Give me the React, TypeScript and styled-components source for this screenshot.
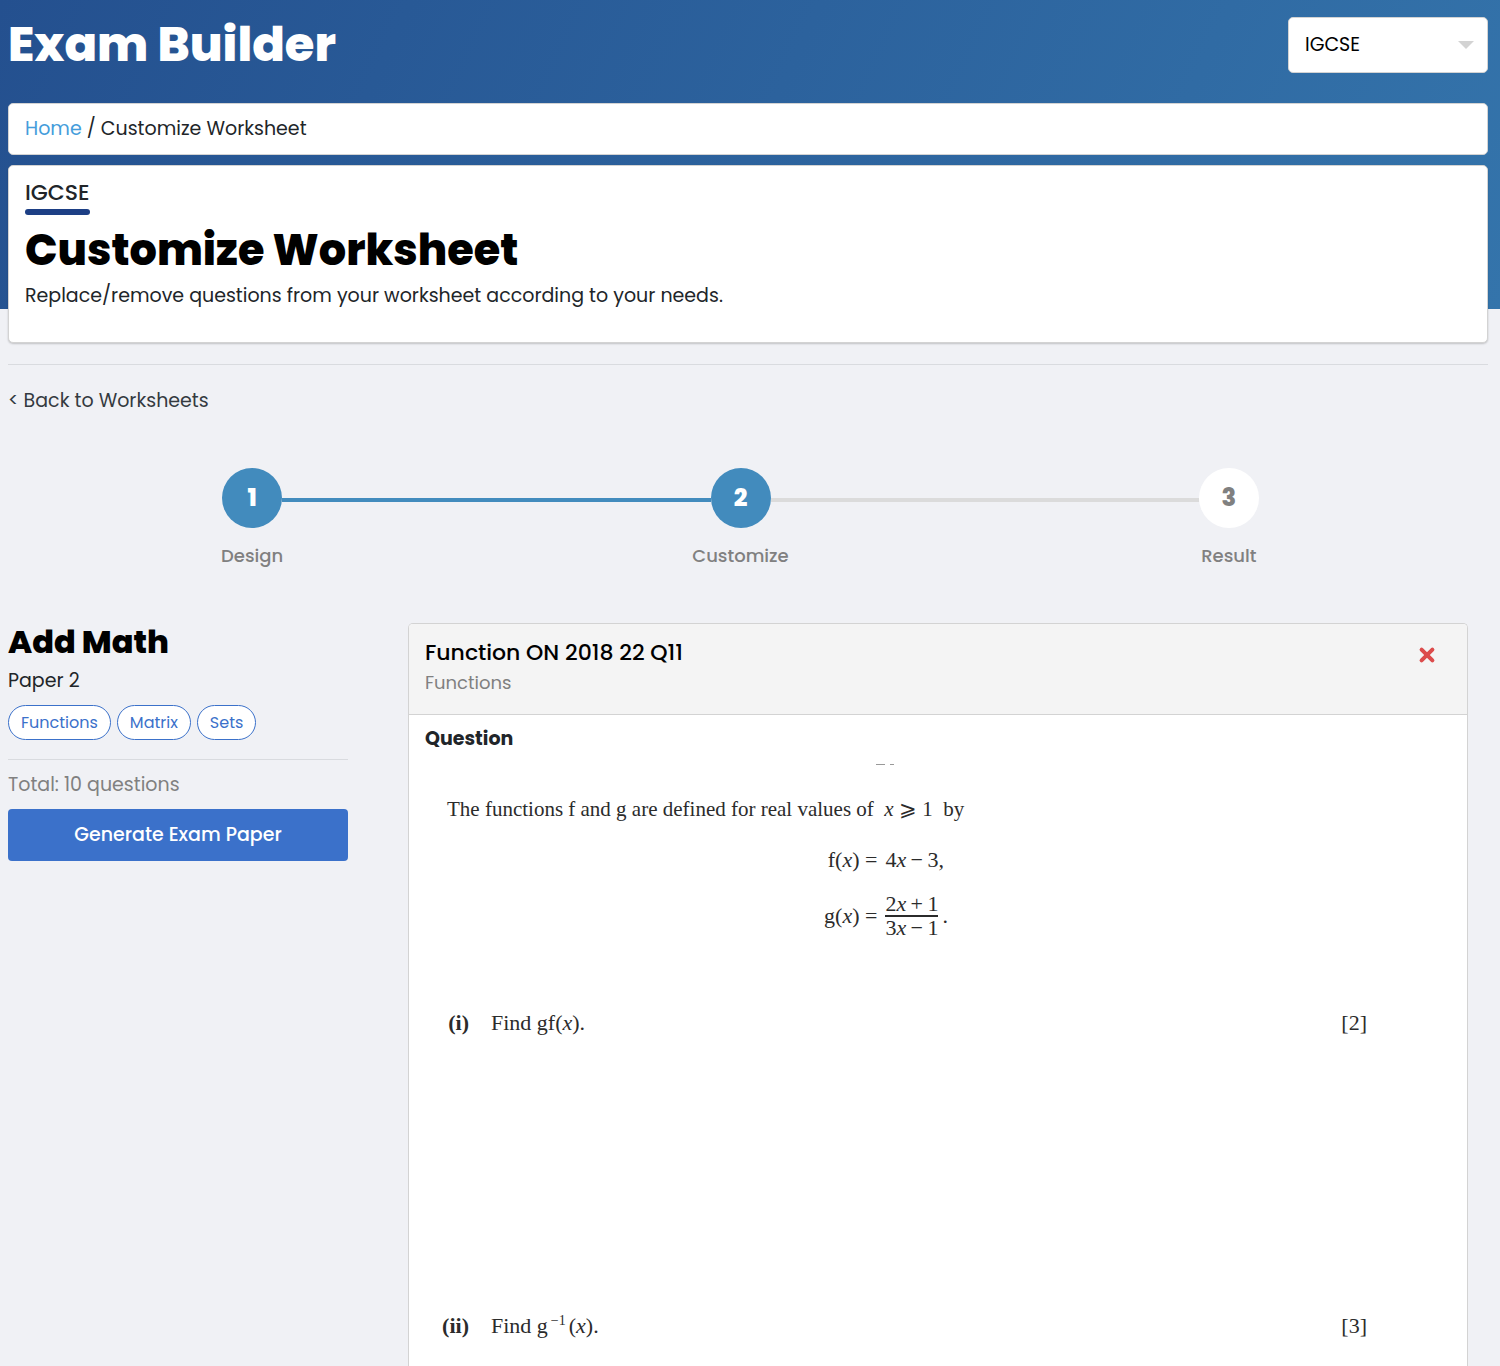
import React from "react";
import styled, { createGlobalStyle } from "styled-components";

const GlobalStyle = createGlobalStyle`
  *, *::before, *::after { box-sizing: border-box; }
  body {
    margin: 0;
    background: #f0f1f5;
    color: #212529;
    font-family: Poppins, Inter, "Open Sans", sans-serif;
    font-size: 19px;
    line-height: 28px;
  }
  h1, h2, h3, p { margin: 0; }
  button, select { font-family: inherit; }
`;

const Page = styled.div`
  display: flex;
  flex-direction: column;
  min-height: 100vh;
  padding: 17px 12px 0 8px;
  background: linear-gradient(115deg, #24508f 0%, #3474ab 100%) no-repeat top / 100% 309px;
`;

const Header = styled.header`
  display: flex;
  justify-content: space-between;
  align-items: center;
  margin-bottom: 30px;
`;

const Brand = styled.h1`
  color: #fff;
  font-size: 48px;
  font-weight: 800;
  line-height: 56px;
`;

const SelectBox = styled.label`
  display: grid;
  align-items: center;
  width: 200px;

  > * { grid-area: 1 / 1; }
  svg {
    justify-self: end;
    margin-right: 14px;
    pointer-events: none;
  }
`;

const CurriculumSelect = styled.select`
  appearance: none;
  height: 56px;
  padding: 0 40px 2px 16px;
  border: 1px solid #d3d3d3;
  border-radius: 5px;
  background: #fff;
  color: #000;
  font-size: 19px;
`;

const Panel = styled.div`
  padding: 0 16px;
  border: 1px solid #d3d3d3;
  border-radius: 5px;
  background: #fff;
`;

const Breadcrumb = styled(Panel).attrs({ as: "nav" })`
  padding-top: 11px;
  padding-bottom: 11px;
  margin-bottom: 10px;
`;

const HomeLink = styled.a`
  color: #459ddb;
  text-decoration: none;
`;

const Hero = styled(Panel).attrs({ as: "section" })`
  display: flex;
  flex-direction: column;
  align-items: flex-start;
  padding-top: 13px;
  padding-bottom: 32px;
  box-shadow: 0 1px 2px rgba(0, 0, 0, 0.2);
`;

const Eyebrow = styled.p`
  padding-bottom: 3px;
  font-size: 22px;
  font-weight: 500;

  &::after {
    content: "";
    display: block;
    height: 6px;
    margin-top: 2px;
    border-radius: 3px;
    background: #1d3f85;
  }
`;

const HeroTitle = styled.h2`
  color: #000;
  font-size: 43px;
  font-weight: 800;
  line-height: 64px;
`;

const Divider = styled.hr<{ $space: number }>`
  width: 100%;
  margin: ${(p) => p.$space}px 0 0;
  border: 0;
  border-top: 1px solid #d9dbdf;
`;

const BackLink = styled.a`
  align-self: flex-start;
  margin-top: 22px;
  color: #343a40;
  text-decoration: none;
`;

const Steps = styled.ol`
  display: grid;
  grid-template-columns: repeat(3, 1fr);
  margin: 53px 15px 0 0;
  padding: 0;
  list-style: none;
`;

const Step = styled.li`
  text-align: center;
  color: #808080;
  font-size: 18px;
  font-weight: 500;
`;

const StepTrack = styled.div`
  display: flex;
  align-items: center;
  margin-bottom: 14px;
`;

const StepLine = styled.span<{ $tone: string }>`
  flex: 1;
  height: 4px;
  margin-top: 4px;
  background: ${(p) => p.$tone};
`;

const StepCircle = styled.span<{ $done: boolean }>`
  width: 60px;
  height: 60px;
  border-radius: 50%;
  background: ${(p) => (p.$done ? "#428bbd" : "#fff")};
  color: ${(p) => (p.$done ? "#fff" : "#808080")};
  font-size: 24px;
  font-weight: 800;
  line-height: 60px;
`;

const Main = styled.main`
  display: grid;
  grid-template-columns: 340px 1fr;
  gap: 60px;
  flex: 1;
  padding: 53px 20px 0 0;
`;

const Sidebar = styled.aside`
  display: flex;
  flex-direction: column;
`;

const Subject = styled.h2`
  color: #000;
  font-size: 32px;
  font-weight: 800;
  line-height: 37px;
`;

const Paper = styled.p`
  margin: 7px 0 10px;
`;

const Tags = styled.ul`
  display: flex;
  flex-wrap: wrap;
  gap: 6px;
  margin: 0;
  padding: 0;
  list-style: none;
`;

const Tag = styled.li`
  padding: 3px 12px;
  border: 1px solid #3b71ca;
  border-radius: 18px;
  background: #fff;
  color: #3b71ca;
  font-size: 16px;
  line-height: 27px;
`;

const Total = styled.p`
  margin: 11px 0 10px;
  color: #808080;
`;

const GenerateButton = styled.button`
  height: 52px;
  padding: 0 0 2px;
  border: 0;
  border-radius: 4px;
  background: #3b71ca;
  color: #fff;
  font-size: 19px;
  font-weight: 500;
`;

const QuestionCard = styled.article`
  border: 1px solid #d3d3d3;
  border-bottom: 0;
  border-radius: 5px 5px 0 0;
  background: #fff;
  overflow: hidden;
`;

const CardHeader = styled.header`
  display: flex;
  justify-content: space-between;
  align-items: flex-start;
  padding: 15px 30px 17px 16px;
  border-bottom: 1px solid #d3d3d3;
  background: #f4f4f4;
`;

const CardTitle = styled.h3`
  margin-bottom: 2px;
  color: #000;
  font-size: 22px;
  font-weight: 500;
`;

const Topic = styled.p`
  color: #808080;
  font-size: 18px;
`;

const RemoveButton = styled.button`
  display: flex;
  margin-top: 6px;
  padding: 0;
  border: 0;
  background: none;
`;

const CardBody = styled.div`
  padding: 10px 16px 0;
`;

const SectionTitle = styled.h3`
  font-size: 19px;
  font-weight: 700;
`;

const Sheet = styled.div`
  padding: 11px 84px 0 0;
  color: #2b2b2b;
  font-family: "Liberation Serif", "Times New Roman", serif;
  font-size: 22px;
`;

const Centered = styled.div`
  display: flex;
  justify-content: center;
  padding-right: 20px;
`;

const Intro = styled.p`
  padding: 29px 0 23px 22px;
  font-size: 21px;
`;

const Equations = styled.div`
  display: grid;
  grid-template-columns: auto auto;
  align-items: center;
  gap: 19px 8px;
  margin-bottom: 70px;
`;

const Lhs = styled.span`
  text-align: right;
`;

const Rhs = styled.span`
  display: flex;
  align-items: center;
  gap: 4px;
`;

const Fraction = styled.span`
  display: flex;
  flex-direction: column;
  line-height: 22px;

  span:first-child { border-bottom: 2px solid #2b2b2b; }
`;

const Part = styled.div`
  display: grid;
  grid-template-columns: 44px 1fr auto;
  column-gap: 22px;
  padding-bottom: 275px;

  &:last-child { padding-bottom: 0; }
  b { text-align: right; }
  sup { margin: 0 3px; font-size: 14px; line-height: 0; }
`;

const steps = ["Design", "Customize", "Result"];
const currentStep = 1;
const tags = ["Functions", "Matrix", "Sets"];

function lineTone(from: number) {
  if (from < 0 || from >= steps.length - 1) return "transparent";
  return from < currentStep ? "#428bbd" : "#dbdbdb";
}

function Stepper() {
  return (
    <Steps>
      {steps.map((name, i) => (
        <Step key={name}>
          <StepTrack>
            <StepLine $tone={lineTone(i - 1)} />
            <StepCircle $done={i <= currentStep}>{i + 1}</StepCircle>
            <StepLine $tone={lineTone(i)} />
          </StepTrack>
          {name}
        </Step>
      ))}
    </Steps>
  );
}

function Question() {
  return (
    <QuestionCard>
      <CardHeader>
        <div>
          <CardTitle>Function ON 2018 22 Q11</CardTitle>
          <Topic>Functions</Topic>
        </div>
        <RemoveButton type="button" aria-label="Remove question">
          <svg width="20" height="20" viewBox="0 0 20 20" fill="none" stroke="#dc4c4c" strokeWidth="4" strokeLinecap="round">
            <path d="M4.6 4.6 15.4 15.4M15.4 4.6 4.6 15.4" />
          </svg>
        </RemoveButton>
      </CardHeader>
      <CardBody>
        <SectionTitle>Question</SectionTitle>
        <Sheet>
          <Centered>
            <svg width="22" height="2" viewBox="0 0 22 2" fill="#999" aria-hidden="true">
              <path d="M1 0h9v1H1zM15 0h4v1h-4z" />
            </svg>
          </Centered>
          <Intro>
            The functions f and g are defined for real values of&nbsp; <i>x</i> ⩾ 1&nbsp; by
          </Intro>
          <Centered>
            <Equations>
              <Lhs>f(<i>x</i>) =</Lhs>
              <Rhs><span>4<i>x</i>{"\u2009−\u2009"}3,</span></Rhs>
              <Lhs>g(<i>x</i>) =</Lhs>
              <Rhs>
                <Fraction>
                  <span>2<i>x</i>{"\u2009+\u2009"}1</span>
                  <span>3<i>x</i>{"\u2009−\u2009"}1</span>
                </Fraction>
                <span>.</span>
              </Rhs>
            </Equations>
          </Centered>
          <Part>
            <b>(i)</b>
            <span>Find gf(<i>x</i>).</span>
            <span>[2]</span>
          </Part>
          <Part>
            <b>(ii)</b>
            <span>Find g<sup>−1</sup>(<i>x</i>).</span>
            <span>[3]</span>
          </Part>
        </Sheet>
      </CardBody>
    </QuestionCard>
  );
}

export default function App() {
  return (
    <>
      <GlobalStyle />
      <Page>
        <Header>
          <Brand>Exam Builder</Brand>
          <SelectBox>
            <CurriculumSelect aria-label="Curriculum" defaultValue="IGCSE">
              <option>IGCSE</option>
            </CurriculumSelect>
            <svg width="16" height="8" viewBox="0 0 16 8" fill="#d3d3d3" aria-hidden="true">
              <path d="M0 0h16L8 8z" />
            </svg>
          </SelectBox>
        </Header>
        <Breadcrumb>
          <HomeLink href="#home">Home</HomeLink> / Customize Worksheet
        </Breadcrumb>
        <Hero>
          <Eyebrow>IGCSE</Eyebrow>
          <HeroTitle>Customize Worksheet</HeroTitle>
          <p>Replace/remove questions from your worksheet according to your needs.</p>
        </Hero>
        <Divider $space={21} />
        <BackLink href="#worksheets">&lt; Back to Worksheets</BackLink>
        <Stepper />
        <Main>
          <Sidebar>
            <Subject>Add Math</Subject>
            <Paper>Paper 2</Paper>
            <Tags>
              {tags.map((tag) => (
                <Tag key={tag}>{tag}</Tag>
              ))}
            </Tags>
            <Divider $space={19} />
            <Total>Total: 10 questions</Total>
            <GenerateButton type="button">Generate Exam Paper</GenerateButton>
          </Sidebar>
          <Question />
        </Main>
      </Page>
    </>
  );
}
